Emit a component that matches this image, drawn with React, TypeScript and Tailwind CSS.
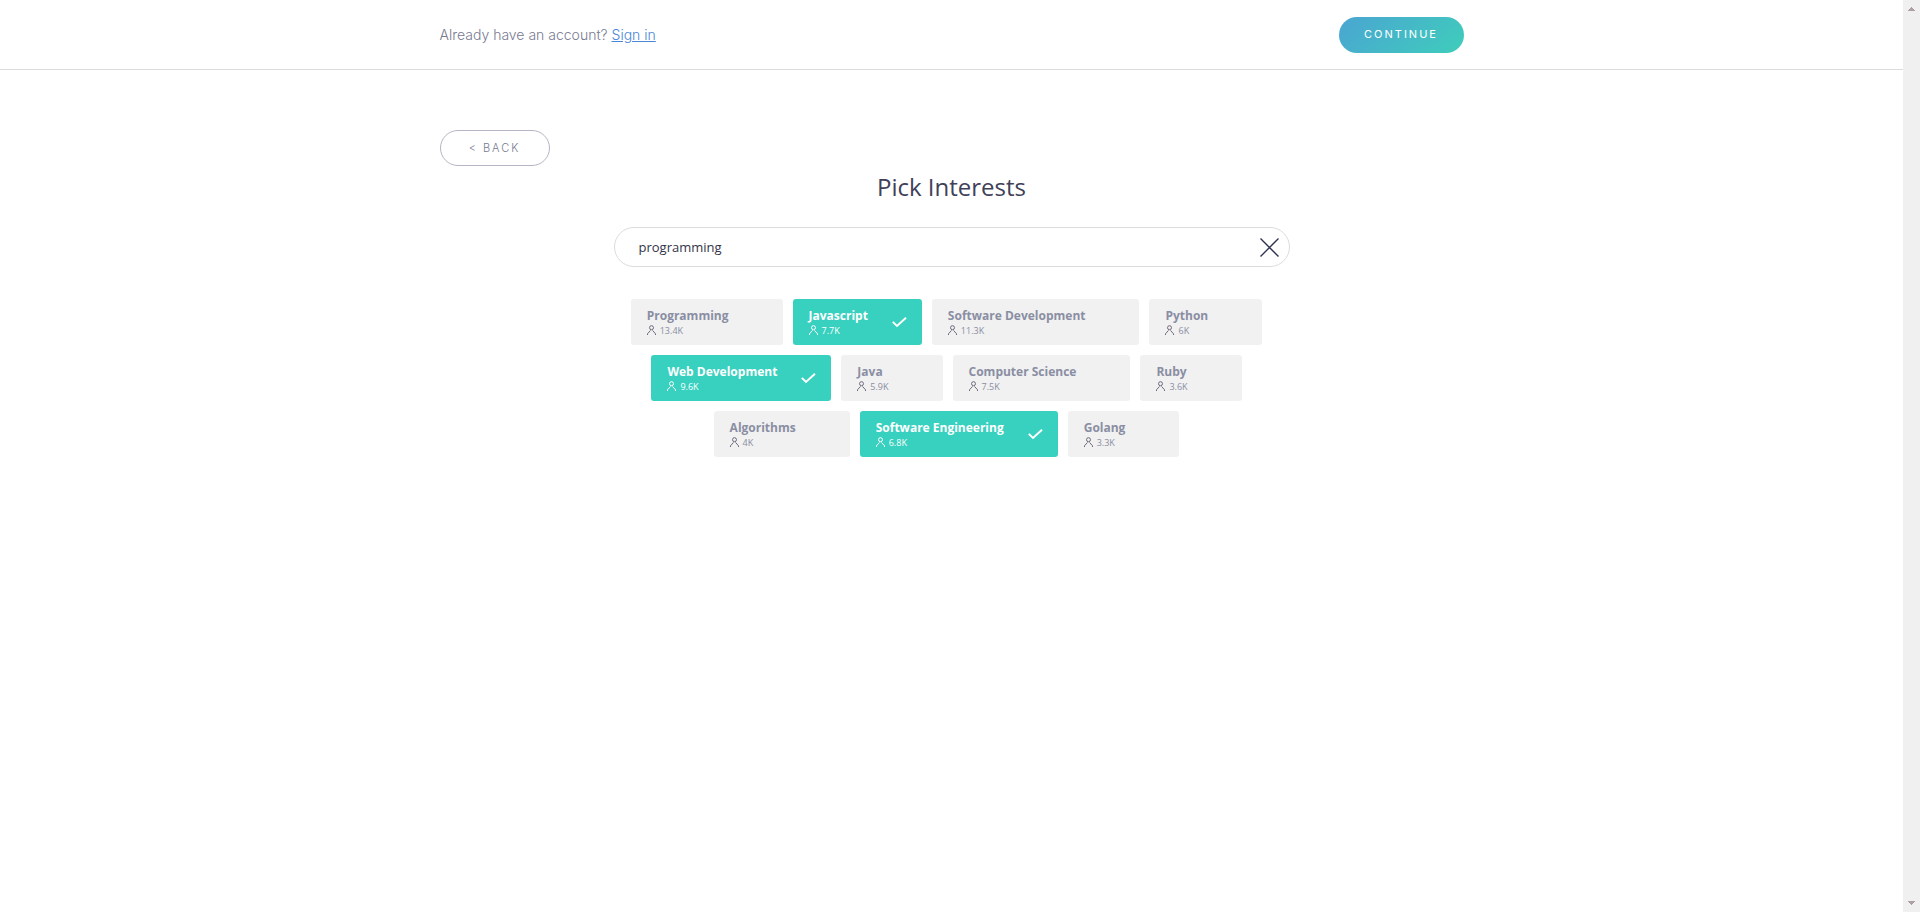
import { useState } from 'react';
import clsx from 'clsx';

interface Interest {
    name: string;
    followers: string;
}

const INTERESTS: Interest[] = [
    { name: 'Programming', followers: '13.4K' },
    { name: 'Javascript', followers: '7.7K' },
    { name: 'Software Development', followers: '11.3K' },
    { name: 'Python', followers: '6K' },
    { name: 'Web Development', followers: '9.6K' },
    { name: 'Java', followers: '5.9K' },
    { name: 'Computer Science', followers: '7.5K' },
    { name: 'Ruby', followers: '3.6K' },
    { name: 'Algorithms', followers: '4K' },
    { name: 'Software Engineering', followers: '6.8K' },
    { name: 'Golang', followers: '3.3K' },
];

function PersonIcon({ className }: { className: string }) {
    return (
        <svg className={clsx('h-[10px] w-[9px] shrink-0', className)} viewBox="0 0 9 10" fill="none" stroke="currentColor" aria-hidden="true">
            <circle cx="4.5" cy="2.7" r="2" />
            <path d="M0.5 10V8.8L3.5 5.4M8.5 10V8.8L5.5 5.4" />
        </svg>
    );
}

function CheckIcon() {
    return (
        <svg className="h-[11px] w-[15px]" viewBox="0 0 15 11" fill="none" stroke="currentColor" strokeWidth="2" aria-hidden="true">
            <path d="M0.8 4.9L5 9L14 0.8" />
        </svg>
    );
}

function InterestChip({ interest, selected, onToggle }: { interest: Interest; selected: boolean; onToggle: () => void }) {
    return (
        <button
            type="button"
            aria-pressed={selected}
            onClick={onToggle}
            className={clsx(
                'mr-[10px] mb-[10px] flex h-[46px] cursor-pointer items-center gap-6 rounded-[3px] pr-[15px] pl-4 text-left',
                selected ? 'bg-[#38d0be] text-white' : 'bg-[#f1f1f1] text-[#8a8ea3]',
            )}
        >
            <span className="flex flex-col">
                <span className="text-[12px] leading-4 font-bold">{interest.name}</span>
                <span className="flex items-center gap-1 text-[9px] leading-[13px]">
                    <PersonIcon className={selected ? 'text-white' : 'text-[#6f6a7c]'} />
                    {interest.followers}
                </span>
            </span>
            <span className="w-[15px]">{selected && <CheckIcon />}</span>
        </button>
    );
}

function ScrollRail() {
    return (
        <div className="flex w-[17px] shrink-0 flex-col items-center justify-between bg-[#f0f0f0] py-[7px] text-[#ad9fa3]" aria-hidden="true">
            <svg className="h-1 w-[7px]" viewBox="0 0 7 4" fill="currentColor" shapeRendering="crispEdges">
                <path d="M3 0h1v1h1v1h1v1h1v1H0V3h1V2h1V1h1z" />
            </svg>
            <svg className="h-1 w-[7px]" viewBox="0 0 7 4" fill="currentColor" shapeRendering="crispEdges">
                <path d="M0 0h7v1H6v1H5v1H4v1H3V3H2V2H1V1H0z" />
            </svg>
        </div>
    );
}

export default function App() {
    const [query, setQuery] = useState('programming');
    const [selected, setSelected] = useState<string[]>(['Javascript', 'Web Development', 'Software Engineering']);

    const toggle = (name: string) => {
        setSelected((prev) => (prev.includes(name) ? prev.filter((n) => n !== name) : [...prev, name]));
    };

    return (
        <div className="flex min-h-screen bg-white font-['Open_Sans',sans-serif]">
            <div className="min-w-0 flex-1">
                <header className="border-b border-[#dcdcdc]">
                    <div className="mx-auto flex h-[69px] max-w-[1024px] items-center justify-between font-['Inter',sans-serif]">
                        <p className="text-[14px] font-light text-[#777a90]">
                            Already have an account?{' '}
                            <a href="#signin" className="text-[#4a86d8] underline">
                                Sign in
                            </a>
                        </p>
                        <button
                            type="button"
                            className="h-9 w-[125px] cursor-pointer rounded-full bg-linear-[135deg] from-[#4aa5d2] to-[#3fcdbb] text-[11px] tracking-[2px] text-white"
                        >
                            CONTINUE
                        </button>
                    </div>
                </header>

                <main className="mx-auto max-w-[1024px] pt-[60px]">
                    <button
                        type="button"
                        className="block h-9 w-[110px] cursor-pointer rounded-full border border-[#b5b5c8] font-['Inter',sans-serif] text-[11px] font-light tracking-[2px] text-[#777a90]"
                    >
                        &lt; BACK
                    </button>

                    <h1 className="mt-[3px] text-center text-[24px] leading-9 text-[#414059]">Pick Interests</h1>

                    <div className="mx-auto mt-[22px] flex h-10 max-w-[676px] items-center rounded-full border border-[#dcdcdc] pt-px pr-[10px] pl-6">
                        <input
                            type="text"
                            aria-label="Search interests"
                            value={query}
                            onChange={(e) => setQuery(e.target.value)}
                            className="min-w-0 flex-1 bg-transparent text-[13px] text-[#34344a] outline-none"
                        />
                        <button type="button" aria-label="Clear search" onClick={() => setQuery('')} className="cursor-pointer">
                            <svg className="size-[19px]" viewBox="0 0 19 19" fill="none" stroke="#2e3150" strokeWidth="1.4">
                                <path d="M0.5 0.5L18.5 18.5M18.5 0.5L0.5 18.5" />
                            </svg>
                        </button>
                    </div>

                    <div className="mx-auto mt-8 flex max-w-[676px] flex-wrap justify-center">
                        {INTERESTS.map((interest) => (
                            <InterestChip
                                key={interest.name}
                                interest={interest}
                                selected={selected.includes(interest.name)}
                                onToggle={() => toggle(interest.name)}
                            />
                        ))}
                    </div>
                </main>
            </div>
            <ScrollRail />
        </div>
    );
}
